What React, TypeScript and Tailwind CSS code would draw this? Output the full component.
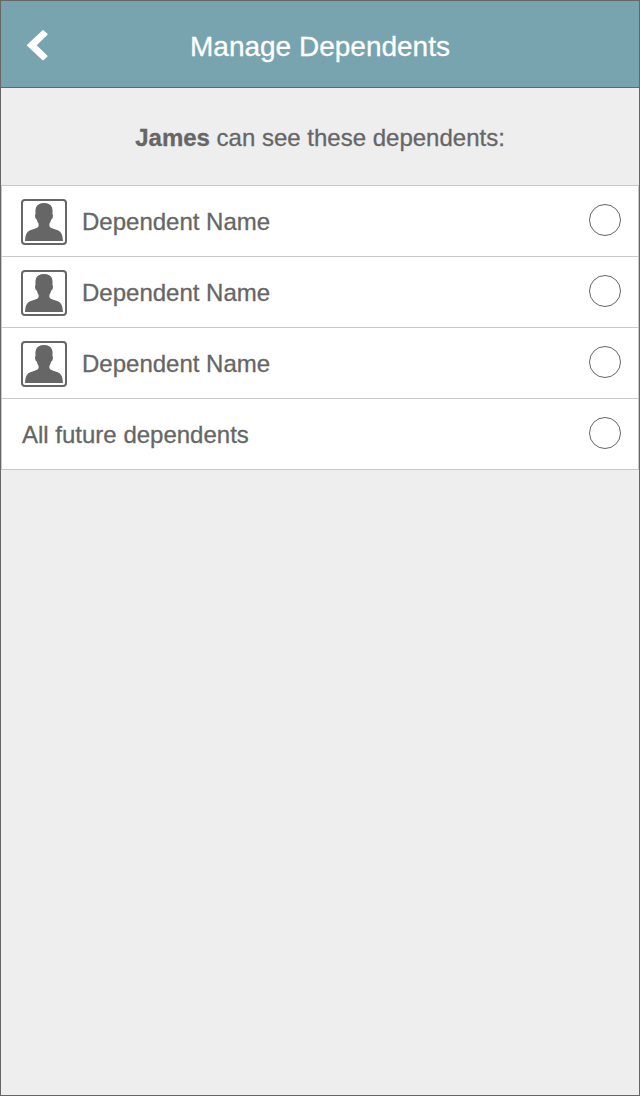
import React from "react";

function Avatar() {
  return (
    <div className="mr-[15px] h-[46px] w-[46px] shrink-0 rounded-[4px] border-2 border-[#666] bg-white">
      <svg viewBox="0 0 42 42" className="block h-full w-full" fill="#666">
        <path d="M21 2C17 2 14 3.500 13 6.500C12.200 9 12.400 11 12.600 13.200C11.800 13.400 11.900 14.800 12.300 16.500C12.600 17.900 13.100 18.300 13.800 18.500C14.200 20.500 14.900 21.800 15.600 22.800V25C15.300 26.800 12.500 27.600 9.500 28.500C4.500 30 2.600 31.500 2 40H40C39.400 31.500 37.500 30 32.500 28.500C29.500 27.600 26.700 26.800 26.400 25V22.800C27.100 21.800 27.800 20.500 28.200 18.500C28.900 18.300 29.400 17.900 29.700 16.500C30.100 14.800 30.200 13.400 29.400 13.200C29.600 11 29.800 9 29 6.500C28 3.500 25 2 21 2Z" />
      </svg>
    </div>
  );
}

function Row({ label, avatar = false }: { label: string; avatar?: boolean }) {
  return (
    <li className="flex h-[71px] items-center border-b border-[#c8c8c8] pt-[2px] pr-[17px] pl-[19px]">
      {avatar ? <Avatar /> : <span className="w-px" />}
      <span className="flex-1 text-2xl leading-none">{label}</span>
      <button className="-mt-[4px] block h-8 w-8" aria-label={label}>
        <svg viewBox="0 0 32 32" className="block h-full w-full" fill="none" stroke="#666">
          <circle cx="16" cy="16" r="15.500" />
        </svg>
      </button>
    </li>
  );
}

export default function App() {
  return (
    <div className="flex h-[1096px] w-[640px] flex-col border border-[#666] bg-[#eee] font-['Liberation_Sans',Arial,sans-serif] text-[#666] [-webkit-text-stroke:0.3px]">
      <header className="grid h-[87px] shrink-0 grid-cols-[80px_1fr_80px] items-center border-b border-[#666] bg-[#77a4af] text-white">
        <button className="ml-[25px] mt-[2px] block h-8 w-6" aria-label="Back">
          <svg viewBox="0 0 24 32" className="block h-full w-full" fill="currentColor">
            <path d="M16.300 1.400Q17 0.700 17.700 1.400L21.300 4.600Q22 5.200 21.300 5.900L10.700 16.300L21.300 26.400Q22 27 21.300 27.700L17.700 31Q17 31.700 16.300 31L0.600 16.300Z" />
          </svg>
        </button>
        <h1 className="mt-[5px] text-center text-[28px] leading-none">Manage Dependents</h1>
      </header>
      <p className="flex h-[97px] shrink-0 items-center justify-center pt-[3px] text-2xl leading-none">
        <span>
          <strong>James</strong> can see these dependents:
        </span>
      </p>
      <ul className="border-x border-t border-[#c8c8c8] bg-white">
        <Row avatar label="Dependent Name" />
        <Row avatar label="Dependent Name" />
        <Row avatar label="Dependent Name" />
        <Row label="All future dependents" />
      </ul>
    </div>
  );
}
